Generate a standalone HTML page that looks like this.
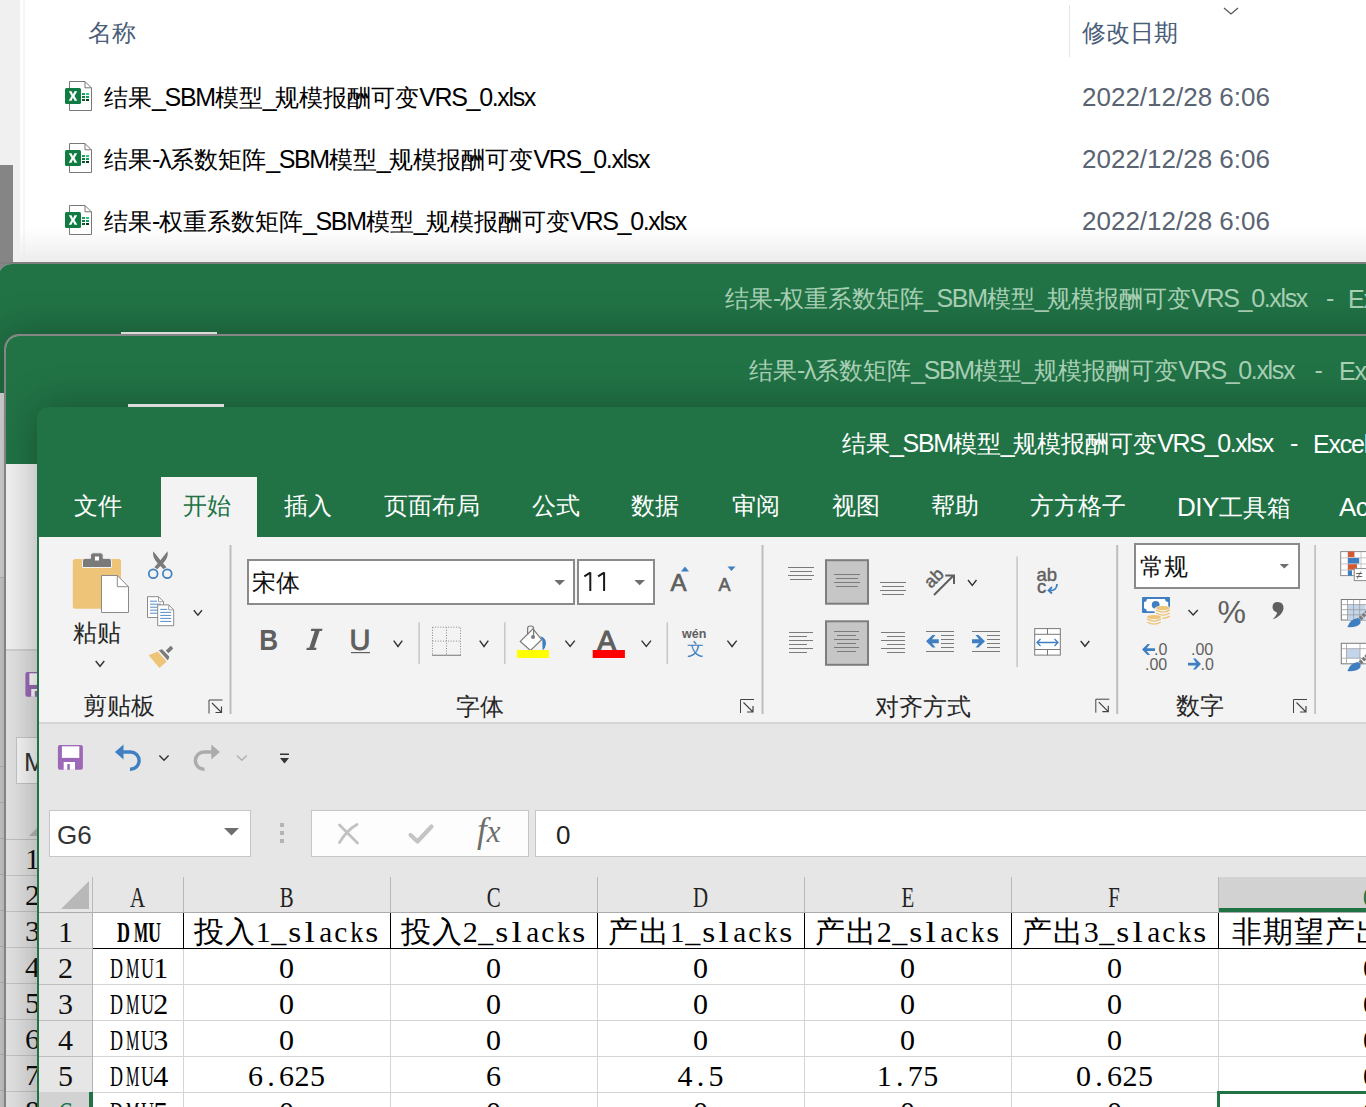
<!DOCTYPE html>
<html><head><meta charset="utf-8">
<style>
*{margin:0;padding:0;box-sizing:border-box}
html,body{width:1366px;height:1107px;overflow:hidden;background:#fff;font-family:"Liberation Sans",sans-serif}
.a{position:absolute}
.t{position:absolute;white-space:nowrap;line-height:1}
svg{overflow:visible}
</style></head><body>
<div class="a" style="left:0px;top:0px;width:20px;height:263px;background:#f0f0f0;"></div>
<div class="a" style="left:0px;top:165px;width:13px;height:115px;background:#858585;"></div>
<div class="a" style="left:23px;top:0px;width:2px;height:263px;background:#f6f6f6;"></div>
<div class="a" style="left:20px;top:228px;width:1346px;height:35px;background:linear-gradient(rgba(240,240,240,0),#ececec);"></div>
<div class="t" style="left:88px;top:21px;font-size:24px;color:#4a5d78;">名称</div>
<div class="a" style="left:1069px;top:5px;width:1px;height:52px;background:#e5e5e5;"></div>
<div class="t" style="left:1082px;top:21px;font-size:24px;color:#4a5d78;">修改日期</div>
<svg class="a" style="left:1223px;top:6px" width="16" height="10"><path d="M1 2 L8 8 L15 2" fill="none" stroke="#555" stroke-width="1.2"/></svg>
<svg class="a" style="left:64px;top:81px" width="30" height="32" viewBox="0 0 30 32">
<path d="M5.5 0.5 H21 L27.5 7 V29.5 H5.5 Z" fill="#fff" stroke="#7a7774" stroke-width="1" stroke-linejoin="round"/>
<path d="M21 0.5 V6.8 H27.5" fill="none" stroke="#7a7774" stroke-width="1"/>
<rect x="18" y="12" width="3" height="2" fill="#17a05d"/><rect x="22" y="12" width="3" height="2" fill="#33c481"/>
<rect x="18" y="15" width="3" height="2" fill="#107c41"/><rect x="22" y="15" width="3" height="2" fill="#17a05d"/>
<rect x="18" y="18" width="3" height="2" fill="#0b5a2e"/><rect x="22" y="18" width="3" height="2" fill="#073d20"/>
<rect x="1" y="7" width="16" height="16" rx="1.5" fill="#107c41"/>
<path d="M4.8 10.3 H7.6 L9 13.4 L10.4 10.3 H13.2 L10.5 15 L13.3 19.7 H10.5 L9 16.6 L7.5 19.7 H4.7 L7.5 15 Z" fill="#fff"/>
</svg>
<div class="t" style="left:104px;top:84px;font-size:26px;color:#000;"><span style="font-size:24px">结果</span><span style="font-size:25px;letter-spacing:-1.35px">_SBM</span><span style="font-size:24px">模型</span><span style="font-size:25px;letter-spacing:-1.35px">_</span><span style="font-size:24px">规模报酬可变</span><span style="font-size:25px;letter-spacing:-1.35px">VRS_0.xlsx</span></div>
<div class="t" style="left:1082px;top:84px;font-size:26px;color:#5b6472;">2022/12/28 6:06</div>
<svg class="a" style="left:64px;top:143px" width="30" height="32" viewBox="0 0 30 32">
<path d="M5.5 0.5 H21 L27.5 7 V29.5 H5.5 Z" fill="#fff" stroke="#7a7774" stroke-width="1" stroke-linejoin="round"/>
<path d="M21 0.5 V6.8 H27.5" fill="none" stroke="#7a7774" stroke-width="1"/>
<rect x="18" y="12" width="3" height="2" fill="#17a05d"/><rect x="22" y="12" width="3" height="2" fill="#33c481"/>
<rect x="18" y="15" width="3" height="2" fill="#107c41"/><rect x="22" y="15" width="3" height="2" fill="#17a05d"/>
<rect x="18" y="18" width="3" height="2" fill="#0b5a2e"/><rect x="22" y="18" width="3" height="2" fill="#073d20"/>
<rect x="1" y="7" width="16" height="16" rx="1.5" fill="#107c41"/>
<path d="M4.8 10.3 H7.6 L9 13.4 L10.4 10.3 H13.2 L10.5 15 L13.3 19.7 H10.5 L9 16.6 L7.5 19.7 H4.7 L7.5 15 Z" fill="#fff"/>
</svg>
<div class="t" style="left:104px;top:146px;font-size:26px;color:#000;"><span style="font-size:24px">结果</span><span style="font-size:25px;letter-spacing:-1.35px">-λ</span><span style="font-size:24px">系数矩阵</span><span style="font-size:25px;letter-spacing:-1.35px">_SBM</span><span style="font-size:24px">模型</span><span style="font-size:25px;letter-spacing:-1.35px">_</span><span style="font-size:24px">规模报酬可变</span><span style="font-size:25px;letter-spacing:-1.35px">VRS_0.xlsx</span></div>
<div class="t" style="left:1082px;top:146px;font-size:26px;color:#5b6472;">2022/12/28 6:06</div>
<svg class="a" style="left:64px;top:205px" width="30" height="32" viewBox="0 0 30 32">
<path d="M5.5 0.5 H21 L27.5 7 V29.5 H5.5 Z" fill="#fff" stroke="#7a7774" stroke-width="1" stroke-linejoin="round"/>
<path d="M21 0.5 V6.8 H27.5" fill="none" stroke="#7a7774" stroke-width="1"/>
<rect x="18" y="12" width="3" height="2" fill="#17a05d"/><rect x="22" y="12" width="3" height="2" fill="#33c481"/>
<rect x="18" y="15" width="3" height="2" fill="#107c41"/><rect x="22" y="15" width="3" height="2" fill="#17a05d"/>
<rect x="18" y="18" width="3" height="2" fill="#0b5a2e"/><rect x="22" y="18" width="3" height="2" fill="#073d20"/>
<rect x="1" y="7" width="16" height="16" rx="1.5" fill="#107c41"/>
<path d="M4.8 10.3 H7.6 L9 13.4 L10.4 10.3 H13.2 L10.5 15 L13.3 19.7 H10.5 L9 16.6 L7.5 19.7 H4.7 L7.5 15 Z" fill="#fff"/>
</svg>
<div class="t" style="left:104px;top:208px;font-size:26px;color:#000;"><span style="font-size:24px">结果</span><span style="font-size:25px;letter-spacing:-1.35px">-</span><span style="font-size:24px">权重系数矩阵</span><span style="font-size:25px;letter-spacing:-1.35px">_SBM</span><span style="font-size:24px">模型</span><span style="font-size:25px;letter-spacing:-1.35px">_</span><span style="font-size:24px">规模报酬可变</span><span style="font-size:25px;letter-spacing:-1.35px">VRS_0.xlsx</span></div>
<div class="t" style="left:1082px;top:208px;font-size:26px;color:#5b6472;">2022/12/28 6:06</div>
<div class="a" style="left:0px;top:262px;width:1366px;height:2px;background:#7f7f7f;"></div>
<div class="a" style="left:-2px;top:264px;width:1400px;height:850px;background:#e9e9e9;border-top-left-radius:14px;overflow:hidden">
<div class="a" style="left:0px;top:0px;width:1400px;height:129px;background:#217346;"></div>
<div class="a" style="left:0px;top:129px;width:1400px;height:184px;background:#e4e4e4;"></div>
<div class="a" style="left:0px;top:313px;width:1400px;height:1px;background:#c4c4c4;"></div>
<div class="a" style="left:0px;top:314px;width:1400px;height:600px;background:#d8d8d8;"></div>
<div class="a" style="left:0px;top:502px;width:60px;height:1px;background:#c2c2c2;"></div>
<div class="a" style="left:0px;top:538px;width:60px;height:1px;background:#c2c2c2;"></div>
<div class="a" style="left:0px;top:574px;width:60px;height:1px;background:#c2c2c2;"></div>
<div class="a" style="left:0px;top:610px;width:60px;height:1px;background:#c2c2c2;"></div>
<div class="a" style="left:0px;top:646px;width:60px;height:1px;background:#c2c2c2;"></div>
<div class="a" style="left:0px;top:682px;width:60px;height:1px;background:#c2c2c2;"></div>
<div class="a" style="left:0px;top:718px;width:60px;height:1px;background:#c2c2c2;"></div>
<div class="a" style="left:0px;top:754px;width:60px;height:1px;background:#c2c2c2;"></div>
<div class="a" style="left:0px;top:790px;width:60px;height:1px;background:#c2c2c2;"></div>
<div class="a" style="left:0px;top:826px;width:60px;height:1px;background:#c2c2c2;"></div>
<div class="a" style="left:0px;top:862px;width:60px;height:1px;background:#c2c2c2;"></div>
<div class="a" style="left:0px;top:898px;width:60px;height:1px;background:#c2c2c2;"></div>
<div class="a" style="left:123px;top:68px;width:96px;height:10px;background:#ffffff;"></div>
<div class="t" style="left:727px;top:21px;font-size:26px;color:#a9d0b5;"><span style="font-size:24px">结果</span><span style="font-size:25px;letter-spacing:-1.35px">-</span><span style="font-size:24px">权重系数矩阵</span><span style="font-size:25px;letter-spacing:-1.35px">_SBM</span><span style="font-size:24px">模型</span><span style="font-size:25px;letter-spacing:-1.35px">_</span><span style="font-size:24px">规模报酬可变</span><span style="font-size:25px;letter-spacing:-1.35px">VRS_0.xlsx</span></div>
<div class="t" style="left:1328px;top:21px;font-size:26px;color:#a9d0b5;"><span style="font-size:25px;letter-spacing:-1.35px">-</span></div>
<div class="t" style="left:1350px;top:22px;font-size:26px;color:#a9d0b5;"><span style="font-size:25px;letter-spacing:-1.2px">Excel</span></div>
</div>
<div class="a" style="left:4px;top:334px;width:1400px;height:850px;background:#e6e6e6;border-top-left-radius:15px;border-top:2px solid #858585;border-left:2px solid #858585;overflow:hidden;box-shadow:0 0 40px rgba(0,0,0,0.3)">
<div class="a" style="left:-6px;top:-336px;width:1366px;height:1107px">
<div class="a" style="left:0px;top:336px;width:1400px;height:128px;background:#217346;"></div>
<div class="a" style="left:128px;top:404px;width:96px;height:10px;background:#ffffff;"></div>
<div class="t" style="left:749px;top:357px;font-size:26px;color:#a9d0b5;"><span style="font-size:24px">结果</span><span style="font-size:25px;letter-spacing:-1.35px">-λ</span><span style="font-size:24px">系数矩阵</span><span style="font-size:25px;letter-spacing:-1.35px">_SBM</span><span style="font-size:24px">模型</span><span style="font-size:25px;letter-spacing:-1.35px">_</span><span style="font-size:24px">规模报酬可变</span><span style="font-size:25px;letter-spacing:-1.35px">VRS_0.xlsx</span></div>
<div class="t" style="left:1314.5px;top:357px;font-size:26px;color:#a9d0b5;"><span style="font-size:25px;letter-spacing:-1.35px">-</span></div>
<div class="t" style="left:1339px;top:358px;font-size:26px;color:#a9d0b5;"><span style="font-size:25px;letter-spacing:-1.2px">Excel</span></div>
<div class="a" style="left:0px;top:464px;width:1400px;height:185px;background:#f1f1f1;"></div>
<div class="a" style="left:0px;top:649px;width:1400px;height:2px;background:#d0d0d0;"></div>
<div class="a" style="left:0px;top:651px;width:1400px;height:500px;background:#e2e2e2;"></div>
<svg class="a" style="left:0;top:0" width="1366" height="1107"><g transform="translate(-32.5 -73)"><rect x="57.9" y="745" width="25" height="24.8" rx="2" fill="#9b69b8"/><rect x="61.9" y="746.3" width="17.4" height="11.6" fill="#fff"/><rect x="63.7" y="762" width="11.3" height="7.8" fill="#fff"/><rect x="67.3" y="764" width="2.5" height="5.8" fill="#9b69b8"/></g></svg>
<div class="a" style="left:16px;top:737px;width:202px;height:47px;background:#f7f7f7;border:1px solid #c6c6c6"></div>
<div class="t" style="left:24px;top:749px;font-size:26px;color:#333;">M</div>
<svg class="a" style="left:29px;top:808px" width="29" height="28"><path d="M28 0 V28 H0 Z" fill="#b8b8b8"/></svg>
<div class="a" style="left:0px;top:839px;width:1400px;height:1px;background:#c0c0c0;"></div>
<div class="a" style="left:0px;top:875px;width:60px;height:1px;background:#c4c4c4;"></div>
<div class="t" style="left:6px;top:844px;width:53px;text-align:center;font-family:Liberation Serif;font-size:30px;color:#111">1</div>
<div class="a" style="left:0px;top:911px;width:60px;height:1px;background:#c4c4c4;"></div>
<div class="t" style="left:6px;top:880px;width:53px;text-align:center;font-family:Liberation Serif;font-size:30px;color:#111">2</div>
<div class="a" style="left:0px;top:947px;width:60px;height:1px;background:#c4c4c4;"></div>
<div class="t" style="left:6px;top:916px;width:53px;text-align:center;font-family:Liberation Serif;font-size:30px;color:#111">3</div>
<div class="a" style="left:0px;top:983px;width:60px;height:1px;background:#c4c4c4;"></div>
<div class="t" style="left:6px;top:952px;width:53px;text-align:center;font-family:Liberation Serif;font-size:30px;color:#111">4</div>
<div class="a" style="left:0px;top:1019px;width:60px;height:1px;background:#c4c4c4;"></div>
<div class="t" style="left:6px;top:988px;width:53px;text-align:center;font-family:Liberation Serif;font-size:30px;color:#111">5</div>
<div class="a" style="left:0px;top:1055px;width:60px;height:1px;background:#c4c4c4;"></div>
<div class="t" style="left:6px;top:1024px;width:53px;text-align:center;font-family:Liberation Serif;font-size:30px;color:#111">6</div>
<div class="a" style="left:0px;top:1091px;width:60px;height:1px;background:#c4c4c4;"></div>
<div class="t" style="left:6px;top:1060px;width:53px;text-align:center;font-family:Liberation Serif;font-size:30px;color:#111">7</div>
<div class="a" style="left:0px;top:1127px;width:60px;height:1px;background:#c4c4c4;"></div>
<div class="t" style="left:6px;top:1096px;width:53px;text-align:center;font-family:Liberation Serif;font-size:30px;color:#111">8</div>
</div>
</div>
<div class="a" style="left:37px;top:407px;width:1400px;height:800px;background:#217346;border-top-left-radius:12px;overflow:hidden;box-shadow:0 0 40px rgba(0,0,0,0.3)">
<div class="t" style="left:805px;top:23px;font-size:26px;color:#fff;"><span style="font-size:24px">结果</span><span style="font-size:25px;letter-spacing:-1.35px">_SBM</span><span style="font-size:24px">模型</span><span style="font-size:25px;letter-spacing:-1.35px">_</span><span style="font-size:24px">规模报酬可变</span><span style="font-size:25px;letter-spacing:-1.35px">VRS_0.xlsx</span></div>
<div class="t" style="left:1253px;top:23px;font-size:26px;color:#fff;"><span style="font-size:25px;letter-spacing:-1.35px">-</span></div>
<div class="t" style="left:1276px;top:24px;font-size:26px;color:#fff;"><span style="font-size:25px;letter-spacing:-1.2px">Excel</span></div>
<div class="a" style="left:124px;top:70px;width:96px;height:60px;background:#f3f3f3;"></div>
<div class="a" style="left:2px;top:130px;width:1400px;height:185px;background:#f3f3f3;"></div>
<div class="a" style="left:2px;top:315px;width:1400px;height:2px;background:#d5d5d5;"></div>
<div class="a" style="left:2px;top:317px;width:1400px;height:483px;background:#e6e6e6;"></div>
<div class="a" style="left:12px;top:403px;width:202px;height:47px;background:#fff;border:1px solid #c6c6c6"></div>
<div class="t" style="left:20px;top:415px;font-size:26px;color:#333;">G6</div>
<svg class="a" style="left:187px;top:421px" width="16" height="8"><path d="M0 0 H15 L7.5 7.5 Z" fill="#6e6e6e"/></svg>
<div class="a" style="left:243px;top:416px;width:4px;height:4px;background:#b4b4b4;"></div>
<div class="a" style="left:243px;top:424px;width:4px;height:4px;background:#b4b4b4;"></div>
<div class="a" style="left:243px;top:432px;width:4px;height:4px;background:#b4b4b4;"></div>
<div class="a" style="left:274px;top:403px;width:218px;height:47px;background:#fdfdfd;border:1px solid #c6c6c6"></div>
<svg class="a" style="left:300px;top:415px" width="24" height="24"><path d="M2.5 3 L20.5 21 M20 2.5 Q10 8 2.5 20.5" fill="none" stroke="#c2c2c2" stroke-width="2.8" stroke-linecap="round"/></svg>
<svg class="a" style="left:370px;top:415px" width="28" height="24"><path d="M3.5 13 L10.5 19.5 L24.5 4.5" fill="none" stroke="#c4c4c4" stroke-width="4.2" stroke-linecap="round" stroke-linejoin="round"/></svg>
<div class="t" style="left:440px;top:406px;font-size:35px;color:#6e6e6e;font-family:Liberation Serif;font-style:italic">f<span style="font-size:31px">x</span></div>
<div class="a" style="left:498px;top:403px;width:900px;height:47px;background:#fff;border:1px solid #c6c6c6"></div>
<div class="t" style="left:519px;top:415px;font-size:26px;color:#222;">0</div>
<div class="a" style="left:2px;top:470px;width:1400px;height:35px;background:#e6e6e6;"></div>
<div class="a" style="left:1182px;top:470px;width:200px;height:35px;background:#d2d2d2;"></div>
<div class="a" style="left:1182px;top:501px;width:200px;height:4px;background:#217346;"></div>
<svg class="a" style="left:24px;top:474px" width="29" height="28"><path d="M28 0 V28 H0 Z" fill="#b8b8b8"/></svg>
<div class="a" style="left:146px;top:470px;width:1px;height:35px;background:#b9b9b9;"></div>
<div class="a" style="left:353px;top:470px;width:1px;height:35px;background:#b9b9b9;"></div>
<div class="a" style="left:560px;top:470px;width:1px;height:35px;background:#b9b9b9;"></div>
<div class="a" style="left:767px;top:470px;width:1px;height:35px;background:#b9b9b9;"></div>
<div class="a" style="left:974px;top:470px;width:1px;height:35px;background:#b9b9b9;"></div>
<div class="a" style="left:1181px;top:470px;width:1px;height:35px;background:#b9b9b9;"></div>
<div class="a" style="left:55px;top:470px;width:1px;height:35px;background:#b9b9b9;"></div>
<div class="a" style="left:2px;top:505px;width:1400px;height:1px;background:#ababab;"></div>
<div class="t" style="left:55px;top:476px;width:91px;text-align:center;font-family:Liberation Serif;font-size:29px;color:#222"><span style="display:inline-block;transform:scaleX(0.72)">A</span></div>
<div class="t" style="left:146px;top:476px;width:207px;text-align:center;font-family:Liberation Serif;font-size:29px;color:#222"><span style="display:inline-block;transform:scaleX(0.72)">B</span></div>
<div class="t" style="left:353px;top:476px;width:207px;text-align:center;font-family:Liberation Serif;font-size:29px;color:#222"><span style="display:inline-block;transform:scaleX(0.72)">C</span></div>
<div class="t" style="left:560px;top:476px;width:207px;text-align:center;font-family:Liberation Serif;font-size:29px;color:#222"><span style="display:inline-block;transform:scaleX(0.72)">D</span></div>
<div class="t" style="left:767px;top:476px;width:207px;text-align:center;font-family:Liberation Serif;font-size:29px;color:#222"><span style="display:inline-block;transform:scaleX(0.72)">E</span></div>
<div class="t" style="left:974px;top:476px;width:207px;text-align:center;font-family:Liberation Serif;font-size:29px;color:#222"><span style="display:inline-block;transform:scaleX(0.72)">F</span></div>
<div class="t" style="left:1181px;top:476px;width:305px;text-align:center;font-family:Liberation Serif;font-size:29px;color:#217346"><span style="display:inline-block;transform:scaleX(0.72)">G</span></div>
<div class="a" style="left:55px;top:506px;width:1400px;height:300px;background:#fff;"></div>
<div class="a" style="left:2px;top:506px;width:53px;height:300px;background:#e6e6e6;"></div>
<div class="a" style="left:55px;top:505px;width:1px;height:300px;background:#b4b4b4;"></div>
<div class="a" style="left:2px;top:541px;width:53px;height:1px;background:#bdbdbd;"></div>
<div class="a" style="left:2px;top:577px;width:53px;height:1px;background:#bdbdbd;"></div>
<div class="a" style="left:2px;top:613px;width:53px;height:1px;background:#bdbdbd;"></div>
<div class="a" style="left:2px;top:649px;width:53px;height:1px;background:#bdbdbd;"></div>
<div class="a" style="left:2px;top:685px;width:53px;height:1px;background:#bdbdbd;"></div>
<div class="a" style="left:2px;top:721px;width:53px;height:1px;background:#bdbdbd;"></div>
<div class="t" style="left:2px;top:510px;width:53px;text-align:center;font-family:Liberation Serif;font-size:30px;color:#111">1</div>
<div class="t" style="left:2px;top:546px;width:53px;text-align:center;font-family:Liberation Serif;font-size:30px;color:#111">2</div>
<div class="t" style="left:2px;top:582px;width:53px;text-align:center;font-family:Liberation Serif;font-size:30px;color:#111">3</div>
<div class="t" style="left:2px;top:618px;width:53px;text-align:center;font-family:Liberation Serif;font-size:30px;color:#111">4</div>
<div class="t" style="left:2px;top:654px;width:53px;text-align:center;font-family:Liberation Serif;font-size:30px;color:#111">5</div>
<div class="t" style="left:2px;top:690px;width:53px;text-align:center;font-family:Liberation Serif;font-size:30px;color:#111">6</div>
<div class="a" style="left:56px;top:577px;width:1400px;height:1px;background:#d4d4d4;"></div>
<div class="a" style="left:56px;top:613px;width:1400px;height:1px;background:#d4d4d4;"></div>
<div class="a" style="left:56px;top:649px;width:1400px;height:1px;background:#d4d4d4;"></div>
<div class="a" style="left:56px;top:685px;width:1400px;height:1px;background:#d4d4d4;"></div>
<div class="a" style="left:56px;top:721px;width:1400px;height:1px;background:#d4d4d4;"></div>
<div class="a" style="left:146px;top:541px;width:1px;height:300px;background:#d4d4d4;"></div>
<div class="a" style="left:353px;top:541px;width:1px;height:300px;background:#d4d4d4;"></div>
<div class="a" style="left:560px;top:541px;width:1px;height:300px;background:#d4d4d4;"></div>
<div class="a" style="left:767px;top:541px;width:1px;height:300px;background:#d4d4d4;"></div>
<div class="a" style="left:974px;top:541px;width:1px;height:300px;background:#d4d4d4;"></div>
<div class="a" style="left:1181px;top:541px;width:1px;height:300px;background:#d4d4d4;"></div>
<div class="a" style="left:56px;top:541px;width:1400px;height:1px;background:#000;"></div>
<div class="a" style="left:146px;top:506px;width:1px;height:35px;background:#000;"></div>
<div class="a" style="left:353px;top:506px;width:1px;height:35px;background:#000;"></div>
<div class="a" style="left:560px;top:506px;width:1px;height:35px;background:#000;"></div>
<div class="a" style="left:767px;top:506px;width:1px;height:35px;background:#000;"></div>
<div class="a" style="left:974px;top:506px;width:1px;height:35px;background:#000;"></div>
<div class="a" style="left:1181px;top:506px;width:1px;height:35px;background:#000;"></div>
<div class="t" style="left:55px;top:509.5px;width:91px;text-align:center;font-family:Liberation Serif;font-size:30px;color:#000;font-weight:bold;"><span style="display:inline-block;width:15.5px;text-align:center;transform:scaleX(0.600)">D</span><span style="display:inline-block;width:15.5px;text-align:center;transform:scaleX(0.500)">M</span><span style="display:inline-block;width:15.5px;text-align:center;transform:scaleX(0.600)">U</span></div>
<div class="t" style="left:146px;top:509.5px;width:207px;text-align:center;font-family:Liberation Serif;font-size:30px;color:#000;"><span style="display:inline-block;width:31.0px;text-align:center">投</span><span style="display:inline-block;width:31.0px;text-align:center">入</span><span style="display:inline-block;width:15.5px;text-align:center">1</span><span style="display:inline-block;width:15.5px;text-align:center">_</span><span style="display:inline-block;width:15.5px;text-align:center;transform:scaleX(1.114)">s</span><span style="display:inline-block;width:15.5px;text-align:center;transform:scaleX(1.250)">l</span><span style="display:inline-block;width:15.5px;text-align:center;transform:scaleX(0.976)">a</span><span style="display:inline-block;width:15.5px;text-align:center;transform:scaleX(0.976)">c</span><span style="display:inline-block;width:15.5px;text-align:center;transform:scaleX(0.867)">k</span><span style="display:inline-block;width:15.5px;text-align:center;transform:scaleX(1.114)">s</span></div>
<div class="t" style="left:353px;top:509.5px;width:207px;text-align:center;font-family:Liberation Serif;font-size:30px;color:#000;"><span style="display:inline-block;width:31.0px;text-align:center">投</span><span style="display:inline-block;width:31.0px;text-align:center">入</span><span style="display:inline-block;width:15.5px;text-align:center">2</span><span style="display:inline-block;width:15.5px;text-align:center">_</span><span style="display:inline-block;width:15.5px;text-align:center;transform:scaleX(1.114)">s</span><span style="display:inline-block;width:15.5px;text-align:center;transform:scaleX(1.250)">l</span><span style="display:inline-block;width:15.5px;text-align:center;transform:scaleX(0.976)">a</span><span style="display:inline-block;width:15.5px;text-align:center;transform:scaleX(0.976)">c</span><span style="display:inline-block;width:15.5px;text-align:center;transform:scaleX(0.867)">k</span><span style="display:inline-block;width:15.5px;text-align:center;transform:scaleX(1.114)">s</span></div>
<div class="t" style="left:560px;top:509.5px;width:207px;text-align:center;font-family:Liberation Serif;font-size:30px;color:#000;"><span style="display:inline-block;width:31.0px;text-align:center">产</span><span style="display:inline-block;width:31.0px;text-align:center">出</span><span style="display:inline-block;width:15.5px;text-align:center">1</span><span style="display:inline-block;width:15.5px;text-align:center">_</span><span style="display:inline-block;width:15.5px;text-align:center;transform:scaleX(1.114)">s</span><span style="display:inline-block;width:15.5px;text-align:center;transform:scaleX(1.250)">l</span><span style="display:inline-block;width:15.5px;text-align:center;transform:scaleX(0.976)">a</span><span style="display:inline-block;width:15.5px;text-align:center;transform:scaleX(0.976)">c</span><span style="display:inline-block;width:15.5px;text-align:center;transform:scaleX(0.867)">k</span><span style="display:inline-block;width:15.5px;text-align:center;transform:scaleX(1.114)">s</span></div>
<div class="t" style="left:767px;top:509.5px;width:207px;text-align:center;font-family:Liberation Serif;font-size:30px;color:#000;"><span style="display:inline-block;width:31.0px;text-align:center">产</span><span style="display:inline-block;width:31.0px;text-align:center">出</span><span style="display:inline-block;width:15.5px;text-align:center">2</span><span style="display:inline-block;width:15.5px;text-align:center">_</span><span style="display:inline-block;width:15.5px;text-align:center;transform:scaleX(1.114)">s</span><span style="display:inline-block;width:15.5px;text-align:center;transform:scaleX(1.250)">l</span><span style="display:inline-block;width:15.5px;text-align:center;transform:scaleX(0.976)">a</span><span style="display:inline-block;width:15.5px;text-align:center;transform:scaleX(0.976)">c</span><span style="display:inline-block;width:15.5px;text-align:center;transform:scaleX(0.867)">k</span><span style="display:inline-block;width:15.5px;text-align:center;transform:scaleX(1.114)">s</span></div>
<div class="t" style="left:974px;top:509.5px;width:207px;text-align:center;font-family:Liberation Serif;font-size:30px;color:#000;"><span style="display:inline-block;width:31.0px;text-align:center">产</span><span style="display:inline-block;width:31.0px;text-align:center">出</span><span style="display:inline-block;width:15.5px;text-align:center">3</span><span style="display:inline-block;width:15.5px;text-align:center">_</span><span style="display:inline-block;width:15.5px;text-align:center;transform:scaleX(1.114)">s</span><span style="display:inline-block;width:15.5px;text-align:center;transform:scaleX(1.250)">l</span><span style="display:inline-block;width:15.5px;text-align:center;transform:scaleX(0.976)">a</span><span style="display:inline-block;width:15.5px;text-align:center;transform:scaleX(0.976)">c</span><span style="display:inline-block;width:15.5px;text-align:center;transform:scaleX(0.867)">k</span><span style="display:inline-block;width:15.5px;text-align:center;transform:scaleX(1.114)">s</span></div>
<div class="t" style="left:1181px;top:509.5px;width:305px;text-align:center;font-family:Liberation Serif;font-size:30px;color:#000;"><span style="display:inline-block;width:31.0px;text-align:center">非</span><span style="display:inline-block;width:31.0px;text-align:center">期</span><span style="display:inline-block;width:31.0px;text-align:center">望</span><span style="display:inline-block;width:31.0px;text-align:center">产</span><span style="display:inline-block;width:31.0px;text-align:center">出</span><span style="display:inline-block;width:15.5px;text-align:center">1</span><span style="display:inline-block;width:15.5px;text-align:center">_</span><span style="display:inline-block;width:15.5px;text-align:center;transform:scaleX(1.114)">s</span><span style="display:inline-block;width:15.5px;text-align:center;transform:scaleX(1.250)">l</span><span style="display:inline-block;width:15.5px;text-align:center;transform:scaleX(0.976)">a</span><span style="display:inline-block;width:15.5px;text-align:center;transform:scaleX(0.976)">c</span><span style="display:inline-block;width:15.5px;text-align:center;transform:scaleX(0.867)">k</span><span style="display:inline-block;width:15.5px;text-align:center;transform:scaleX(1.114)">s</span></div>
<div class="t" style="left:55px;top:545.5px;width:91px;text-align:center;font-family:Liberation Serif;font-size:30px;color:#000;"><span style="display:inline-block;width:15.5px;text-align:center;transform:scaleX(0.600)">D</span><span style="display:inline-block;width:15.5px;text-align:center;transform:scaleX(0.500)">M</span><span style="display:inline-block;width:15.5px;text-align:center;transform:scaleX(0.600)">U</span><span style="display:inline-block;width:15.5px;text-align:center">1</span></div>
<div class="t" style="left:146px;top:545.5px;width:207px;text-align:center;font-family:Liberation Serif;font-size:30px;color:#000;"><span style="display:inline-block;width:15.5px;text-align:center">0</span></div>
<div class="t" style="left:353px;top:545.5px;width:207px;text-align:center;font-family:Liberation Serif;font-size:30px;color:#000;"><span style="display:inline-block;width:15.5px;text-align:center">0</span></div>
<div class="t" style="left:560px;top:545.5px;width:207px;text-align:center;font-family:Liberation Serif;font-size:30px;color:#000;"><span style="display:inline-block;width:15.5px;text-align:center">0</span></div>
<div class="t" style="left:767px;top:545.5px;width:207px;text-align:center;font-family:Liberation Serif;font-size:30px;color:#000;"><span style="display:inline-block;width:15.5px;text-align:center">0</span></div>
<div class="t" style="left:974px;top:545.5px;width:207px;text-align:center;font-family:Liberation Serif;font-size:30px;color:#000;"><span style="display:inline-block;width:15.5px;text-align:center">0</span></div>
<div class="t" style="left:1181px;top:545.5px;width:305px;text-align:center;font-family:Liberation Serif;font-size:30px;color:#000;"><span style="display:inline-block;width:15.5px;text-align:center">0</span></div>
<div class="t" style="left:55px;top:581.5px;width:91px;text-align:center;font-family:Liberation Serif;font-size:30px;color:#000;"><span style="display:inline-block;width:15.5px;text-align:center;transform:scaleX(0.600)">D</span><span style="display:inline-block;width:15.5px;text-align:center;transform:scaleX(0.500)">M</span><span style="display:inline-block;width:15.5px;text-align:center;transform:scaleX(0.600)">U</span><span style="display:inline-block;width:15.5px;text-align:center">2</span></div>
<div class="t" style="left:146px;top:581.5px;width:207px;text-align:center;font-family:Liberation Serif;font-size:30px;color:#000;"><span style="display:inline-block;width:15.5px;text-align:center">0</span></div>
<div class="t" style="left:353px;top:581.5px;width:207px;text-align:center;font-family:Liberation Serif;font-size:30px;color:#000;"><span style="display:inline-block;width:15.5px;text-align:center">0</span></div>
<div class="t" style="left:560px;top:581.5px;width:207px;text-align:center;font-family:Liberation Serif;font-size:30px;color:#000;"><span style="display:inline-block;width:15.5px;text-align:center">0</span></div>
<div class="t" style="left:767px;top:581.5px;width:207px;text-align:center;font-family:Liberation Serif;font-size:30px;color:#000;"><span style="display:inline-block;width:15.5px;text-align:center">0</span></div>
<div class="t" style="left:974px;top:581.5px;width:207px;text-align:center;font-family:Liberation Serif;font-size:30px;color:#000;"><span style="display:inline-block;width:15.5px;text-align:center">0</span></div>
<div class="t" style="left:1181px;top:581.5px;width:305px;text-align:center;font-family:Liberation Serif;font-size:30px;color:#000;"><span style="display:inline-block;width:15.5px;text-align:center">0</span></div>
<div class="t" style="left:55px;top:617.5px;width:91px;text-align:center;font-family:Liberation Serif;font-size:30px;color:#000;"><span style="display:inline-block;width:15.5px;text-align:center;transform:scaleX(0.600)">D</span><span style="display:inline-block;width:15.5px;text-align:center;transform:scaleX(0.500)">M</span><span style="display:inline-block;width:15.5px;text-align:center;transform:scaleX(0.600)">U</span><span style="display:inline-block;width:15.5px;text-align:center">3</span></div>
<div class="t" style="left:146px;top:617.5px;width:207px;text-align:center;font-family:Liberation Serif;font-size:30px;color:#000;"><span style="display:inline-block;width:15.5px;text-align:center">0</span></div>
<div class="t" style="left:353px;top:617.5px;width:207px;text-align:center;font-family:Liberation Serif;font-size:30px;color:#000;"><span style="display:inline-block;width:15.5px;text-align:center">0</span></div>
<div class="t" style="left:560px;top:617.5px;width:207px;text-align:center;font-family:Liberation Serif;font-size:30px;color:#000;"><span style="display:inline-block;width:15.5px;text-align:center">0</span></div>
<div class="t" style="left:767px;top:617.5px;width:207px;text-align:center;font-family:Liberation Serif;font-size:30px;color:#000;"><span style="display:inline-block;width:15.5px;text-align:center">0</span></div>
<div class="t" style="left:974px;top:617.5px;width:207px;text-align:center;font-family:Liberation Serif;font-size:30px;color:#000;"><span style="display:inline-block;width:15.5px;text-align:center">0</span></div>
<div class="t" style="left:1181px;top:617.5px;width:305px;text-align:center;font-family:Liberation Serif;font-size:30px;color:#000;"><span style="display:inline-block;width:15.5px;text-align:center">0</span></div>
<div class="t" style="left:55px;top:653.5px;width:91px;text-align:center;font-family:Liberation Serif;font-size:30px;color:#000;"><span style="display:inline-block;width:15.5px;text-align:center;transform:scaleX(0.600)">D</span><span style="display:inline-block;width:15.5px;text-align:center;transform:scaleX(0.500)">M</span><span style="display:inline-block;width:15.5px;text-align:center;transform:scaleX(0.600)">U</span><span style="display:inline-block;width:15.5px;text-align:center">4</span></div>
<div class="t" style="left:146px;top:653.5px;width:207px;text-align:center;font-family:Liberation Serif;font-size:30px;color:#000;"><span style="display:inline-block;width:15.5px;text-align:center">6</span><span style="display:inline-block;width:15.5px;text-align:center">.</span><span style="display:inline-block;width:15.5px;text-align:center">6</span><span style="display:inline-block;width:15.5px;text-align:center">2</span><span style="display:inline-block;width:15.5px;text-align:center">5</span></div>
<div class="t" style="left:353px;top:653.5px;width:207px;text-align:center;font-family:Liberation Serif;font-size:30px;color:#000;"><span style="display:inline-block;width:15.5px;text-align:center">6</span></div>
<div class="t" style="left:560px;top:653.5px;width:207px;text-align:center;font-family:Liberation Serif;font-size:30px;color:#000;"><span style="display:inline-block;width:15.5px;text-align:center">4</span><span style="display:inline-block;width:15.5px;text-align:center">.</span><span style="display:inline-block;width:15.5px;text-align:center">5</span></div>
<div class="t" style="left:767px;top:653.5px;width:207px;text-align:center;font-family:Liberation Serif;font-size:30px;color:#000;"><span style="display:inline-block;width:15.5px;text-align:center">1</span><span style="display:inline-block;width:15.5px;text-align:center">.</span><span style="display:inline-block;width:15.5px;text-align:center">7</span><span style="display:inline-block;width:15.5px;text-align:center">5</span></div>
<div class="t" style="left:974px;top:653.5px;width:207px;text-align:center;font-family:Liberation Serif;font-size:30px;color:#000;"><span style="display:inline-block;width:15.5px;text-align:center">0</span><span style="display:inline-block;width:15.5px;text-align:center">.</span><span style="display:inline-block;width:15.5px;text-align:center">6</span><span style="display:inline-block;width:15.5px;text-align:center">2</span><span style="display:inline-block;width:15.5px;text-align:center">5</span></div>
<div class="t" style="left:1181px;top:653.5px;width:305px;text-align:center;font-family:Liberation Serif;font-size:30px;color:#000;"><span style="display:inline-block;width:15.5px;text-align:center">0</span></div>
<div class="t" style="left:55px;top:689.5px;width:91px;text-align:center;font-family:Liberation Serif;font-size:30px;color:#000;"><span style="display:inline-block;width:15.5px;text-align:center;transform:scaleX(0.600)">D</span><span style="display:inline-block;width:15.5px;text-align:center;transform:scaleX(0.500)">M</span><span style="display:inline-block;width:15.5px;text-align:center;transform:scaleX(0.600)">U</span><span style="display:inline-block;width:15.5px;text-align:center">5</span></div>
<div class="t" style="left:146px;top:689.5px;width:207px;text-align:center;font-family:Liberation Serif;font-size:30px;color:#000;"><span style="display:inline-block;width:15.5px;text-align:center">0</span></div>
<div class="t" style="left:353px;top:689.5px;width:207px;text-align:center;font-family:Liberation Serif;font-size:30px;color:#000;"><span style="display:inline-block;width:15.5px;text-align:center">0</span></div>
<div class="t" style="left:560px;top:689.5px;width:207px;text-align:center;font-family:Liberation Serif;font-size:30px;color:#000;"><span style="display:inline-block;width:15.5px;text-align:center">0</span></div>
<div class="t" style="left:767px;top:689.5px;width:207px;text-align:center;font-family:Liberation Serif;font-size:30px;color:#000;"><span style="display:inline-block;width:15.5px;text-align:center">0</span></div>
<div class="t" style="left:974px;top:689.5px;width:207px;text-align:center;font-family:Liberation Serif;font-size:30px;color:#000;"><span style="display:inline-block;width:15.5px;text-align:center">0</span></div>
<div class="t" style="left:1181px;top:689.5px;width:305px;text-align:center;font-family:Liberation Serif;font-size:30px;color:#000;"><span style="display:inline-block;width:15.5px;text-align:center">0</span></div>
<div class="a" style="left:1180px;top:684px;width:200px;height:3px;background:#217346;"></div>
<div class="a" style="left:1180px;top:684px;width:3px;height:40px;background:#217346;"></div>
<div class="a" style="left:2px;top:685px;width:53px;height:40px;background:#d2d2d2;"></div>
<div class="a" style="left:52px;top:685px;width:4px;height:40px;background:#217346;"></div>
<div class="t" style="left:2px;top:690px;width:53px;text-align:center;font-family:Liberation Serif;font-size:30px;color:#217346">6</div>
<div class="t" style="left:37px;top:87px;font-size:24px;color:#fff;"><span style="font-size:24px">文件</span></div>
<div class="t" style="left:146px;top:87px;font-size:24px;color:#217346;"><span style="font-size:24px">开始</span></div>
<div class="t" style="left:247px;top:87px;font-size:24px;color:#fff;"><span style="font-size:24px">插入</span></div>
<div class="t" style="left:347px;top:87px;font-size:24px;color:#fff;"><span style="font-size:24px">页面布局</span></div>
<div class="t" style="left:495px;top:87px;font-size:24px;color:#fff;"><span style="font-size:24px">公式</span></div>
<div class="t" style="left:594px;top:87px;font-size:24px;color:#fff;"><span style="font-size:24px">数据</span></div>
<div class="t" style="left:695px;top:87px;font-size:24px;color:#fff;"><span style="font-size:24px">审阅</span></div>
<div class="t" style="left:795px;top:87px;font-size:24px;color:#fff;"><span style="font-size:24px">视图</span></div>
<div class="t" style="left:894px;top:87px;font-size:24px;color:#fff;"><span style="font-size:24px">帮助</span></div>
<div class="t" style="left:993px;top:87px;font-size:24px;color:#fff;"><span style="font-size:24px">方方格子</span></div>
<div class="t" style="left:1140px;top:87px;font-size:24px;color:#fff;"><span style="font-size:26px;letter-spacing:-0.5px">DIY</span><span style="font-size:24px">工具箱</span></div>
<div class="t" style="left:1302px;top:87px;font-size:24px;color:#fff;"><span style="font-size:26px;letter-spacing:-0.5px">Ac</span></div>
<div class="t" style="left:36px;top:214px;font-size:24px;color:#262626;">粘贴</div>
<div class="t" style="left:46px;top:287px;font-size:24px;color:#262626;">剪贴板</div>
<div class="t" style="left:419px;top:288px;font-size:24px;color:#262626;">字体</div>
<div class="t" style="left:838px;top:288px;font-size:24px;color:#262626;">对齐方式</div>
<div class="t" style="left:1139px;top:287px;font-size:24px;color:#262626;">数字</div>
<div class="a" style="left:210px;top:152px;width:328px;height:46px;background:#fff;border:2px solid #8a8a8a"></div>
<div class="t" style="left:215px;top:164px;font-size:24px;color:#111;">宋体</div>
<div class="a" style="left:540px;top:152px;width:78px;height:46px;background:#fff;border:2px solid #8a8a8a"></div>
<div class="a" style="left:1097px;top:136px;width:166px;height:46px;background:#fff;border:2px solid #8a8a8a"></div>
<div class="t" style="left:1103px;top:148px;font-size:24px;color:#111;">常规</div>
<svg class="a" style="left:-37px;top:-407px" width="1366" height="1107"><rect x="72.8" y="559" width="48.2" height="49.7" rx="2.5" fill="#eec479"/><path d="M82.5 567.5 V561 Q82.5 558.3 85 558.3 H90.5 V555.5 Q90.5 552.8 93 552.8 H100.8 Q103.2 552.8 103.2 555.5 V558.3 H109 Q111.5 558.3 111.5 561 V567.5 Z" fill="#7a7a7a" stroke="#f3f3f3" stroke-width="1"/><rect x="95" y="556.5" width="4" height="4" fill="#fff"/><path d="M101.5 575.5 H117.3 L128.5 586.7 V612.5 H101.5 Z" fill="#fff" stroke="#8a8a8a" stroke-width="1"/><path d="M117.3 575.5 V586.7 H128.5" fill="none" stroke="#8a8a8a" stroke-width="1"/><path d="M95.7 661 L100.0 666.3 L104.3 661" fill="none" stroke="#333" stroke-width="1.4"/><path d="M153.3 551.2 Q151.8 557 157.6 563.2 L163.6 569.3 L166.4 567.2 L160.6 560.6 Z" fill="#7a7a7a"/><path d="M167.5 551.2 Q169 557 163.2 563.2 L157.2 569.3 L154.4 567.2 L160.2 560.6 Z" fill="#7a7a7a"/><circle cx="153.2" cy="573.7" r="4.4" fill="#f3f3f3" stroke="#3f7fc1" stroke-width="1.7"/><circle cx="167.3" cy="573.7" r="4.4" fill="#f3f3f3" stroke="#3f7fc1" stroke-width="1.7"/><path d="M147.5 596.7 H158.5 L163.5 601.7 V617.5 H147.5 Z" fill="#fff" stroke="#8a8a8a" stroke-width="1"/><path d="M158.5 596.7 V601.7 H163.5" fill="none" stroke="#8a8a8a" stroke-width="0.8"/><path d="M150 601.2 H157" stroke="#3f7fc1" stroke-width="0.9"/><path d="M150 604.2 H161" stroke="#3f7fc1" stroke-width="0.9"/><path d="M150 607.2 H161" stroke="#3f7fc1" stroke-width="0.9"/><path d="M150 610.2 H161" stroke="#3f7fc1" stroke-width="0.9"/><path d="M150 613.2 H161" stroke="#3f7fc1" stroke-width="0.9"/><path d="M157.7 604.9 H168.7 L173.7 609.9 V625.6999999999999 H157.7 Z" fill="#fff" stroke="#8a8a8a" stroke-width="1"/><path d="M168.7 604.9 V609.9 H173.7" fill="none" stroke="#8a8a8a" stroke-width="0.8"/><path d="M160.2 609.4 H167.2" stroke="#3f7fc1" stroke-width="0.9"/><path d="M160.2 612.4 H171.2" stroke="#3f7fc1" stroke-width="0.9"/><path d="M160.2 615.4 H171.2" stroke="#3f7fc1" stroke-width="0.9"/><path d="M160.2 618.4 H171.2" stroke="#3f7fc1" stroke-width="0.9"/><path d="M160.2 621.4 H171.2" stroke="#3f7fc1" stroke-width="0.9"/><path d="M193.8 610.2 L197.9 615.1 L202 610.2" fill="none" stroke="#333" stroke-width="1.4"/><path d="M148.6 655.3 L157.7 651.4 L166.7 661.4 L159.5 667.9 Z" fill="#eec479"/><path d="M158.8 650.3 L162.1 649.2 L169.2 656.5 Q169.5 658.5 167.6 660.2 Z" fill="#7a7a7a"/><path d="M165.8 650.5 L170.5 646.1 Q171.8 645.5 173.1 648.7 L168.4 653.2 Z" fill="#7a7a7a"/><path d="M209.0 713.5 V700.0 H222.5" fill="none" stroke="#444" stroke-width="1"/><path d="M212.0 703.0 L221.5 712.5 M221.5 706.5 V712.5 H215.5" fill="none" stroke="#444" stroke-width="1.2"/><rect x="229.5" y="545" width="2" height="169" fill="#bdbdbd"/><path d="M590.3 572.3 V591 M584.3 576.3 L590.3 572.6" fill="none" stroke="#1a1a1a" stroke-width="2"/><path d="M604.0999999999999 572.3 V591 M598.0999999999999 576.3 L604.0999999999999 572.6" fill="none" stroke="#1a1a1a" stroke-width="2"/><path d="M554.3 580 H565 L559.65 585.3 Z" fill="#6e6e6e"/><path d="M634.3 580 H645 L639.65 585.3 Z" fill="#6e6e6e"/><text x="670.5" y="591" font-family="Liberation Sans" font-size="24" fill="#5f5f5f" stroke="#5f5f5f" stroke-width="0.7">A</text><path d="M681 571.5 L685 566.6 L689 571.5 Z" fill="#3f7fc1"/><text x="718.6" y="591" font-family="Liberation Sans" font-size="18" fill="#5f5f5f" stroke="#5f5f5f" stroke-width="0.6">A</text><path d="M727.5 566.6 H735.5 L731.5 571 Z" fill="#3f7fc1"/><text x="259.3" y="650.3" font-family="Liberation Sans" font-weight="bold" font-size="29" fill="#5f5f5f" transform="translate(259.3 0) scale(0.9 1) translate(-259.3 0)">B</text><path d="M311.3 628.7 H322.5 L322 630.9 H319.6 L314.1 647.8 H316.6 L316.1 650 H306.3 L306.8 647.8 H309.3 L314.8 630.9 H310.8 Z" fill="#5f5f5f"/><text x="349.5" y="650.3" font-family="Liberation Sans" font-size="29" fill="#5f5f5f" stroke="#5f5f5f" stroke-width="0.9">U</text><path d="M351 652.6 H370" stroke="#5f5f5f" stroke-width="1.2"/><path d="M393.7 640.6 L398.0 646.5 L402.3 640.6" fill="none" stroke="#333" stroke-width="1.4"/><rect x="418.3" y="622.3" width="1.6" height="41.7" fill="#c8c8c8"/><path d="M432.5 627.2 H460.5 V655 M432.5 627.2 V655 M446.5 627.2 V655 M432.5 641.1 H460.5" fill="none" stroke="#8a8a8a" stroke-width="1" stroke-dasharray="1 1.6"/><path d="M432 655.3 H461" stroke="#8a8a8a" stroke-width="1.2"/><path d="M479.7 640.6 L484.0 646.5 L488.3 640.6" fill="none" stroke="#333" stroke-width="1.4"/><rect x="504" y="622.3" width="1.6" height="41.7" fill="#c8c8c8"/><path d="M520.3 641.4 L533 628.8 L541.6 639.7 L530.5 650.5 Z" fill="#fff" stroke="#7a7a7a" stroke-width="1.2"/><path d="M527.6 634.8 V628.5 Q527.6 626 530.3 626 H531 Q533.6 626 533.6 628.5 V637" fill="none" stroke="#7a7a7a" stroke-width="1.2"/><circle cx="533" cy="637" r="2" fill="#7a7a7a"/><path d="M540.3 636.3 Q546.3 637.8 546 644 Q545.6 648 542.6 650.5 L542.3 640 Z" fill="#3f7fc1"/><rect x="517" y="650" width="32" height="8" fill="#ffff00"/><path d="M565.4 640.6 L570.0999999999999 646.5 L574.8 640.6" fill="none" stroke="#333" stroke-width="1.4"/><text x="597" y="650.5" font-family="Liberation Sans" font-size="29" fill="#5f5f5f" stroke="#5f5f5f" stroke-width="1.2">A</text><rect x="592.7" y="650" width="32.2" height="8" fill="#ff0000"/><path d="M641.6 640.6 L646.3 646.5 L651 640.6" fill="none" stroke="#333" stroke-width="1.4"/><rect x="666.5" y="622.3" width="1.6" height="41.7" fill="#c8c8c8"/><text x="682" y="638.3" font-family="Liberation Sans" font-weight="bold" font-size="12.5" fill="#5f5f5f">wén</text><text x="687" y="654.5" font-family="Liberation Sans" font-size="17" fill="#3f7fc1">文</text><path d="M727.4 640.6 L732.05 646.5 L736.7 640.6" fill="none" stroke="#333" stroke-width="1.4"/><path d="M740.5 713 V699.5 H754" fill="none" stroke="#444" stroke-width="1"/><path d="M743.5 702.5 L753 712 M753 706 V712 H747" fill="none" stroke="#444" stroke-width="1.2"/><rect x="761.5" y="545" width="2" height="169" fill="#bdbdbd"/><path d="M788 567.5 H814" stroke="#7b7b7b" stroke-width="1.0"/><path d="M790 571.5 H812" stroke="#7b7b7b" stroke-width="1.0"/><path d="M788 575.5 H814" stroke="#7b7b7b" stroke-width="1.0"/><path d="M790 579.5 H812" stroke="#7b7b7b" stroke-width="1.0"/><rect x="826" y="560.2" width="42" height="43.5" fill="#c6c6c6" stroke="#7d7d7d" stroke-width="2"/><path d="M834 574.5 H860" stroke="#7b7b7b" stroke-width="1.0"/><path d="M836 578.5 H858" stroke="#7b7b7b" stroke-width="1.0"/><path d="M834 582.5 H860" stroke="#7b7b7b" stroke-width="1.0"/><path d="M836 586.5 H858" stroke="#7b7b7b" stroke-width="1.0"/><path d="M880 582.5 H906" stroke="#7b7b7b" stroke-width="1.0"/><path d="M882 586.5 H904" stroke="#7b7b7b" stroke-width="1.0"/><path d="M880 590.5 H906" stroke="#7b7b7b" stroke-width="1.0"/><path d="M882 594.5 H904" stroke="#7b7b7b" stroke-width="1.0"/><text x="0" y="0" font-family="Liberation Sans" font-size="17.5" fill="#5f5f5f" stroke="#5f5f5f" stroke-width="0.5" transform="translate(931 589) rotate(-45)">ab</text><path d="M934 595 L953.5 575.5 M945.3 575.5 H954 V584" fill="none" stroke="#5f5f5f" stroke-width="2"/><path d="M968 580 L972.25 585.4 L976.5 580" fill="none" stroke="#333" stroke-width="1.4"/><path d="M789 632.5 H813" stroke="#7b7b7b" stroke-width="1.0"/><path d="M789 636.5 H807" stroke="#7b7b7b" stroke-width="1.0"/><path d="M789 640.5 H813" stroke="#7b7b7b" stroke-width="1.0"/><path d="M789 644.5 H807" stroke="#7b7b7b" stroke-width="1.0"/><path d="M789 648.5 H813" stroke="#7b7b7b" stroke-width="1.0"/><path d="M789 652.5 H807" stroke="#7b7b7b" stroke-width="1.0"/><rect x="826" y="621.3" width="42" height="43.5" fill="#c6c6c6" stroke="#7d7d7d" stroke-width="2"/><path d="M834 631.5 H859" stroke="#7b7b7b" stroke-width="1.0"/><path d="M837 635.5 H856" stroke="#7b7b7b" stroke-width="1.0"/><path d="M834 639.5 H859" stroke="#7b7b7b" stroke-width="1.0"/><path d="M837 643.5 H856" stroke="#7b7b7b" stroke-width="1.0"/><path d="M834 647.5 H859" stroke="#7b7b7b" stroke-width="1.0"/><path d="M837 651.5 H856" stroke="#7b7b7b" stroke-width="1.0"/><path d="M881 632.5 H905" stroke="#7b7b7b" stroke-width="1.0"/><path d="M887 636.5 H905" stroke="#7b7b7b" stroke-width="1.0"/><path d="M881 640.5 H905" stroke="#7b7b7b" stroke-width="1.0"/><path d="M887 644.5 H905" stroke="#7b7b7b" stroke-width="1.0"/><path d="M881 648.5 H905" stroke="#7b7b7b" stroke-width="1.0"/><path d="M887 652.5 H905" stroke="#7b7b7b" stroke-width="1.0"/><path d="M926 631.5 H954" stroke="#7b7b7b" stroke-width="1.0"/><path d="M926 651.5 H954" stroke="#7b7b7b" stroke-width="1.0"/><path d="M941 635.5 H954" stroke="#7b7b7b" stroke-width="1.0"/><path d="M941 639.5 H954" stroke="#7b7b7b" stroke-width="1.0"/><path d="M941 643.5 H954" stroke="#7b7b7b" stroke-width="1.0"/><path d="M941 647.5 H954" stroke="#7b7b7b" stroke-width="1.0"/><path d="M926 641.3 L932.5 635 H935.5 L932 639.3 H938.8 V643.3 H932 L935.5 647.5 H932.5 Z" fill="#3f7fc1"/><path d="M972 631.5 H1000" stroke="#7b7b7b" stroke-width="1.0"/><path d="M972 651.5 H1000" stroke="#7b7b7b" stroke-width="1.0"/><path d="M987 635.5 H1000" stroke="#7b7b7b" stroke-width="1.0"/><path d="M987 639.5 H1000" stroke="#7b7b7b" stroke-width="1.0"/><path d="M987 643.5 H1000" stroke="#7b7b7b" stroke-width="1.0"/><path d="M987 647.5 H1000" stroke="#7b7b7b" stroke-width="1.0"/><path d="M985 641.3 L978.5 635 H975.5 L979 639.3 H972 V643.3 H979 L975.5 647.5 H978.5 Z" fill="#3f7fc1"/><rect x="1016.3" y="556.4" width="1.6" height="110.6" fill="#c8c8c8"/><text x="1036.5" y="580.6" font-family="Liberation Sans" font-size="18.5" fill="#5f5f5f" stroke="#5f5f5f" stroke-width="0.4">ab</text><text x="1037" y="593.3" font-family="Liberation Sans" font-size="18.5" fill="#5f5f5f" stroke="#5f5f5f" stroke-width="0.4">c</text><path d="M1057 584 Q1057 591 1049 590.5 M1052 587 L1048.5 590.5 L1052 593.5" fill="none" stroke="#3f7fc1" stroke-width="1.8"/><rect x="1034.7" y="628.6" width="25.6" height="26.5" fill="#fff" stroke="#7a7a7a" stroke-width="1"/><path d="M1034.7 634.3 H1060.3 M1034.7 649.5 H1060.3 M1047.5 628.6 V634.3 M1047.5 649.5 V655.1" stroke="#7a7a7a" stroke-width="1"/><path d="M1037 642.5 H1058 M1040.5 639 L1037 642.5 L1040.5 646 M1054.5 639 L1058 642.5 L1054.5 646" fill="none" stroke="#3f7fc1" stroke-width="1.3"/><path d="M1080.7 641 L1085.0 646.3 L1089.3 641" fill="none" stroke="#333" stroke-width="1.4"/><path d="M1095.8 712.7 V699.2 H1109.3" fill="none" stroke="#444" stroke-width="1"/><path d="M1098.8 702.2 L1108.3 711.7 M1108.3 705.7 V711.7 H1102.3" fill="none" stroke="#444" stroke-width="1.2"/><rect x="1116.2" y="545" width="2" height="169" fill="#bdbdbd"/><path d="M1279.6 564 H1289 L1284.3 568.6 Z" fill="#6e6e6e"/><rect x="1142" y="597" width="28" height="16" rx="1" fill="#3f7fc1"/><path d="M1147 599 H1165 Q1165.3 601.8 1168.2 602 V608.5 Q1165.3 608.8 1165 611.2 H1147 Q1146.7 608.6 1144 608.3 V602 Q1146.7 601.8 1147 599 Z" fill="#fff"/><circle cx="1155.7" cy="604.8" r="3.9" fill="#3f7fc1"/><ellipse cx="1162.9" cy="609" rx="8.3" ry="3.4" fill="#f3f3f3"/><rect x="1154.6000000000001" y="609" width="16.6" height="14" fill="#f3f3f3"/><ellipse cx="1162.9" cy="608" rx="6.9" ry="2" fill="#eec479"/><path d="M1156.0 609.9 Q1162.9 614.3000000000001 1169.8000000000002 609.9" fill="none" stroke="#eec479" stroke-width="1.3"/><path d="M1156.0 613.0 Q1162.9 617.4000000000001 1169.8000000000002 613.0" fill="none" stroke="#eec479" stroke-width="1.3"/><path d="M1156.0 616.0999999999999 Q1162.9 620.5 1169.8000000000002 616.0999999999999" fill="none" stroke="#eec479" stroke-width="1.3"/><ellipse cx="1154" cy="618" rx="8.3" ry="3.4" fill="#f3f3f3"/><rect x="1145.7" y="618" width="16.6" height="11" fill="#f3f3f3"/><ellipse cx="1154" cy="617" rx="6.9" ry="2" fill="#eec479"/><path d="M1147.1 618.9 Q1154 623.3000000000001 1160.9 618.9" fill="none" stroke="#eec479" stroke-width="1.3"/><path d="M1147.1 622.0 Q1154 626.4000000000001 1160.9 622.0" fill="none" stroke="#eec479" stroke-width="1.3"/><path d="M1188.5 610 L1193.15 614.9 L1197.8 610" fill="none" stroke="#333" stroke-width="1.4"/><text x="1217.5" y="623" font-family="Liberation Sans" font-size="32" fill="#5f5f5f">%</text><path d="M1277.5 602 Q1284 602 1283.5 609 Q1282 616 1272.5 619.5 Q1277 615 1277 612.5 Q1272.5 611 1272.5 607 Q1272.8 602 1277.5 602 Z" fill="#5f5f5f"/><path d="M1142 649.5 L1147.5 644 H1150 L1146.8 648.2 H1155 V651 H1146.8 L1150 655 H1147.5 Z" fill="#3f7fc1"/><text x="1154" y="654.8" font-family="Liberation Sans" font-size="16" fill="#5f5f5f">.0</text><text x="1145" y="669.8" font-family="Liberation Sans" font-size="16" fill="#5f5f5f">.00</text><text x="1191" y="654.8" font-family="Liberation Sans" font-size="16" fill="#5f5f5f">.00</text><path d="M1201 664 L1195.5 658.5 H1193 L1196.2 662.7 H1188 V665.5 H1196.2 L1193 669.5 H1195.5 Z" fill="#3f7fc1"/><text x="1200.5" y="669.8" font-family="Liberation Sans" font-size="16" fill="#5f5f5f">.0</text><path d="M1293.5 713 V699.5 H1307" fill="none" stroke="#444" stroke-width="1"/><path d="M1296.5 702.5 L1306 712 M1306 706 V712 H1300" fill="none" stroke="#444" stroke-width="1.2"/><rect x="1314.3" y="545" width="1.6" height="169" fill="#bdbdbd"/><rect x="1340.7" y="551.6" width="40" height="24" fill="#fff" stroke="#8a8a8a" stroke-width="1"/><path d="M1340.7 557.8 H1380 M1340.7 563.9 H1380 M1340.7 570 H1380 M1348 551.6 V576 M1354.2 551.6 V576 M1361 551.6 V576" stroke="#b8b8b8" stroke-width="0.8"/><rect x="1348" y="551.6" width="6.2" height="5.5" fill="#d65a31"/><rect x="1348" y="558" width="11.2" height="5.5" fill="#3f7fc1"/><rect x="1348" y="564.2" width="9" height="5.5" fill="#d65a31"/><rect x="1348" y="570.3" width="4" height="5.5" fill="#3f7fc1"/><rect x="1354.3" y="568.6" width="20" height="12" fill="#fff" stroke="#8a8a8a" stroke-width="1"/><text x="1356" y="579" font-family="Liberation Sans" font-size="12" fill="#5f5f5f">≠</text><rect x="1341.3" y="599.5" width="30" height="20.5" fill="#fff" stroke="#7a7a7a" stroke-width="1"/><rect x="1341.3" y="643.3" width="30" height="20.5" fill="#fff" stroke="#7a7a7a" stroke-width="1"/><rect x="1347.5" y="604.6" width="18" height="15.4" fill="#c3d5ea"/><path d="M1341.3 604.6 H1372 M1341.3 609.7 H1372 M1341.3 614.8 H1372 M1347.5 599.5 V620 M1353.6 599.5 V620 M1359.7 599.5 V620" stroke="#9a9a9a" stroke-width="0.8"/><rect x="1346.5" y="648.7" width="13.5" height="9.5" fill="#c3d5ea"/><path d="M1341.3 648.7 H1372 M1341.3 658.2 H1372 M1346.5 643.3 V663.8 M1360 643.3 V663.8" stroke="#a0a0a0" stroke-width="0.8"/><path d="M1347.4 627 Q1350 619 1358 618 Q1362 620 1360 624 Q1355 628 1347.4 627 Z" fill="#3f7fc1"/><path d="M1360 619 L1370 609" stroke="#7a7a7a" stroke-width="4" stroke-dasharray="3 1"/><path d="M1347.4 671 Q1350 663 1358 662 Q1362 664 1360 668 Q1355 672 1347.4 671 Z" fill="#3f7fc1"/><path d="M1360 663 L1370 653" stroke="#7a7a7a" stroke-width="4" stroke-dasharray="3 1"/></svg>
<svg class="a" style="left:-37px;top:-407px" width="1366" height="1107"><g transform="translate(0 0)"><rect x="57.9" y="745" width="25" height="24.8" rx="2" fill="#9b69b8"/><rect x="61.9" y="746.3" width="17.4" height="11.6" fill="#fff"/><rect x="63.7" y="762" width="11.3" height="7.8" fill="#fff"/><rect x="67.3" y="764" width="2.5" height="5.8" fill="#9b69b8"/><path d="M120 752 H130.5 A8.6 8.6 0 0 1 130.5 769.2 H130" fill="none" stroke="#3e80c2" stroke-width="3.4"/><path d="M115 752 L123.5 744.5 L123.5 759.5 Z" fill="#3e80c2"/><path d="M159.4 755.5 L164 760.3 L168.6 755.5" fill="none" stroke="#333" stroke-width="1.4"/><path d="M214.5 752 H204 A8.6 8.6 0 0 0 204 769.2 H204.5" fill="none" stroke="#ababab" stroke-width="3.4"/><path d="M219.8 752 L211.3 744.5 L211.3 759.5 Z" fill="#ababab"/><path d="M237 755.5 L241.8 760.3 L246.7 755.5" fill="none" stroke="#b0b0b0" stroke-width="1.4"/><rect x="280" y="753.5" width="9" height="1.5" fill="#333"/><path d="M280 758 H289 L284.5 763.4 Z" fill="#333"/></g></svg>
</div>
</body></html>
